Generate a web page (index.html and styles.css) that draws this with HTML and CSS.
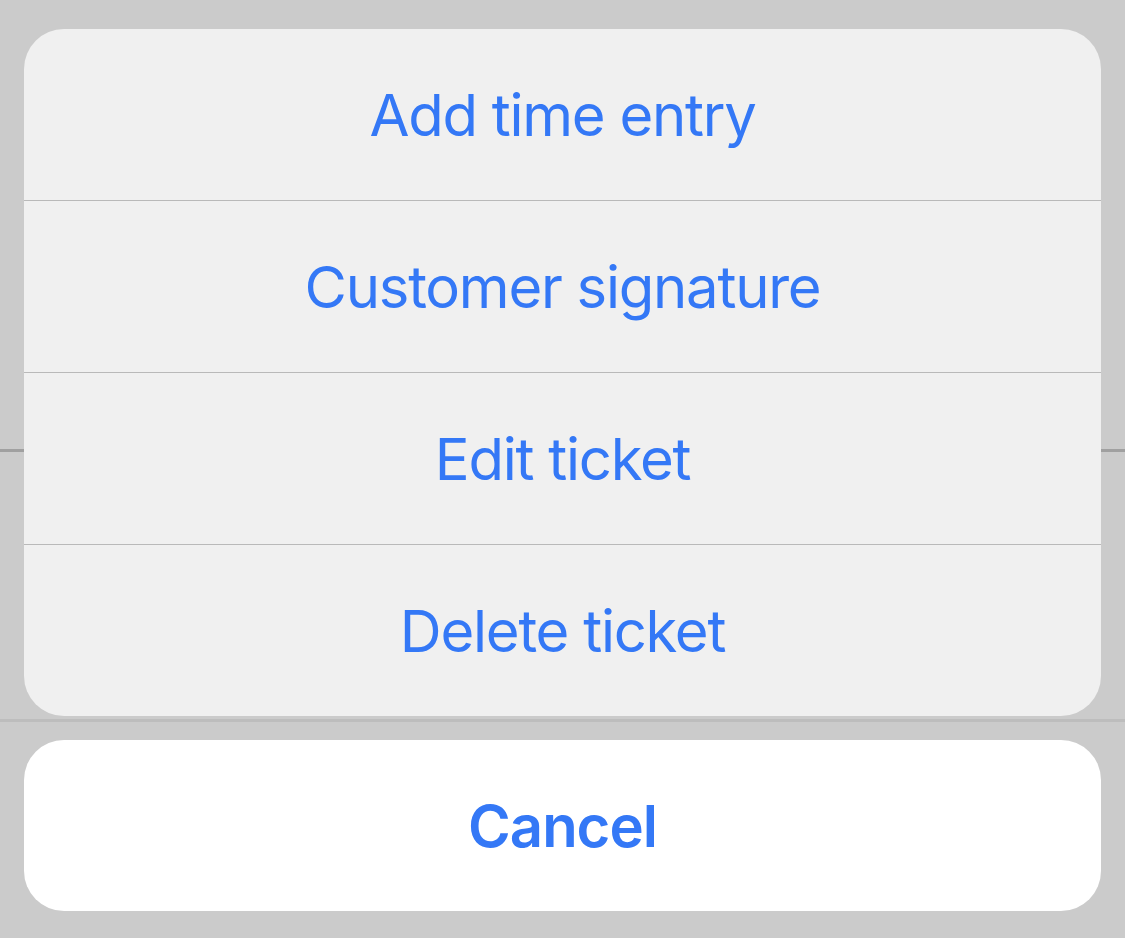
FILE: index.html
```html
<!DOCTYPE html>
<html>
<head>
<meta charset="utf-8">
<link rel="stylesheet" href="styles.css">
</head>
<body>
<div class="backdrop">
  <div class="bg-line bg-line-a"></div>
  <div class="bg-line bg-line-b"></div>
  <div class="sheet">
    <div class="group">
      <div class="action">Add time entry</div>
      <div class="action">Customer signature</div>
      <div class="action">Edit ticket</div>
      <div class="action">Delete ticket</div>
    </div>
    <div class="cancel">Cancel</div>
  </div>
</div>
</body>
</html>
```
FILE: styles.css
```css
html, body {
  margin: 0;
  padding: 0;
  background: #cbcbcb;
}
.backdrop {
  position: relative;
  width: 1125px;
  height: 938px;
  overflow: hidden;
  background: #cbcbcb;
}
.bg-line {
  position: absolute;
  left: 0;
  right: 0;
}
.bg-line-a {
  top: 449px;
  height: 3px;
  background: #a0a0a0;
}
.bg-line-b {
  top: 719px;
  height: 3px;
  background: #bdbdbd;
}
.sheet {
  position: absolute;
  left: 24px;
  top: 29px;
  width: 1077px;
  display: flex;
  flex-direction: column;
  gap: 24px;
  font-family: Inter, "Liberation Sans", sans-serif;
  color: #3478f6;
}
.group {
  background: #f0f0f0;
  border-radius: 40px;
  overflow: hidden;
  display: flex;
  flex-direction: column;
}
.action {
  height: 171px;
  display: flex;
  align-items: center;
  justify-content: center;
  font-size: 58px;
  font-weight: 400;
  letter-spacing: -1.25px;
  border-top: 1px solid #b9b9b9;
}
.action:first-child {
  border-top: none;
}
.cancel {
  height: 171px;
  background: #ffffff;
  border-radius: 40px;
  display: flex;
  align-items: center;
  justify-content: center;
  font-size: 58px;
  font-weight: 600;
  letter-spacing: -1px;
}
```
